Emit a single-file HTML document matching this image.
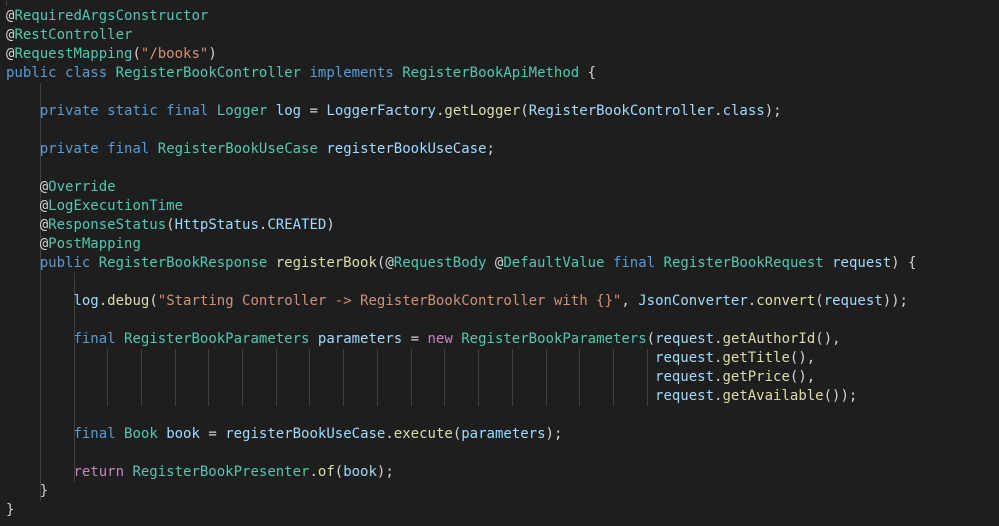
<!DOCTYPE html><html><head><style>
body{margin:0;background:#1e1e1e;width:999px;height:526px;overflow:hidden;position:relative}
#c{position:absolute;left:6px;top:7px;font-family:"DejaVu Sans Mono","Liberation Mono",monospace;font-size:14px;line-height:19px;color:#d4d4d4;white-space:pre}
.k{color:#569cd6}.t{color:#4ec9b0}.v{color:#9cdcfe}.f{color:#dcdcaa}.s{color:#ce9178}.c{color:#c586c0}
.g{position:absolute;width:1px;background:#404040}
</style></head><body>
<div class="g" style="left:6px;top:0;height:6px"></div>
<div class="g" style="left:40px;top:83px;height:418px"></div>
<div class="g" style="left:74px;top:273px;height:209px"></div>
<div id="c">@<span class="t">RequiredArgsConstructor</span>
@<span class="t">RestController</span>
@<span class="t">RequestMapping</span>(<span class="s">"/books"</span>)
<span class="k">public</span> <span class="k">class</span> <span class="t">RegisterBookController</span> <span class="k">implements</span> <span class="t">RegisterBookApiMethod</span> {

    <span class="k">private</span> <span class="k">static</span> <span class="k">final</span> <span class="t">Logger</span> <span class="v">log</span> = <span class="v">LoggerFactory</span>.<span class="f">getLogger</span>(<span class="v">RegisterBookController</span>.<span class="v">class</span>);

    <span class="k">private</span> <span class="k">final</span> <span class="t">RegisterBookUseCase</span> <span class="v">registerBookUseCase</span>;

    @<span class="t">Override</span>
    @<span class="t">LogExecutionTime</span>
    @<span class="t">ResponseStatus</span>(<span class="v">HttpStatus</span>.<span class="v">CREATED</span>)
    @<span class="t">PostMapping</span>
    <span class="k">public</span> <span class="t">RegisterBookResponse</span> <span class="f">registerBook</span>(@<span class="t">RequestBody</span> @<span class="t">DefaultValue</span> <span class="k">final</span> <span class="t">RegisterBookRequest</span> <span class="v">request</span>) {

        <span class="v">log</span>.<span class="f">debug</span>(<span class="s">"Starting Controller -&gt; RegisterBookController with {}"</span>, <span class="v">JsonConverter</span>.<span class="f">convert</span>(<span class="v">request</span>));

        <span class="k">final</span> <span class="t">RegisterBookParameters</span> <span class="v">parameters</span> = <span class="c">new</span> <span class="t">RegisterBookParameters</span>(<span class="v">request</span>.<span class="f">getAuthorId</span>(),
                                                                             <span class="v">request</span>.<span class="f">getTitle</span>(),
                                                                             <span class="v">request</span>.<span class="f">getPrice</span>(),
                                                                             <span class="v">request</span>.<span class="f">getAvailable</span>());

        <span class="k">final</span> <span class="t">Book</span> <span class="v">book</span> = <span class="v">registerBookUseCase</span>.<span class="f">execute</span>(<span class="v">parameters</span>);

        <span class="c">return</span> <span class="t">RegisterBookPresenter</span>.<span class="f">of</span>(<span class="v">book</span>);
    }
}</div>
<script>
for(let c=12;c<=76;c+=4){const d=document.createElement('div');d.className='g';d.style.left=Math.round(6+c*8.43)+'px';d.style.top='349px';d.style.height='57px';document.body.appendChild(d);}
</script>
</body></html>
